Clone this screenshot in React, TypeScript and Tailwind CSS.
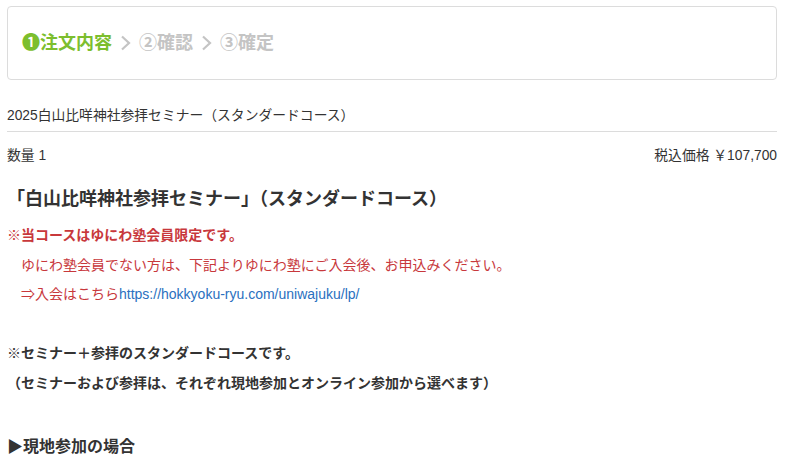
import React from "react";

const FONT = "font-['Liberation_Sans','Noto_Sans_CJK_JP',sans-serif]";

function Chevron() {
    return (
        <svg width="14" height="18" viewBox="0 0 14 18" className="ml-[6px] mr-[7px]">
            <path d="M4 2.5 L11 9 L4 15.5" fill="none" stroke="#c4c4c4" strokeWidth="2.2" />
        </svg>
    );
}

export default function App() {
    return (
        <div className={`${FONT} bg-white w-[789px] h-[464px] overflow-hidden pl-[7px] pt-[6px] text-[#333]`}>
            {/* Steps */}
            <div className="w-[770px] h-[74px] border border-[#dcdcdc] rounded-[4px] flex items-center pl-[14px]">
                <span className="text-[18px] font-bold text-[#7cbe2e]">❶注文内容</span>
                <Chevron />
                <span className="text-[18px] font-bold text-[#c4c4c4]">②確認</span>
                <Chevron />
                <span className="text-[18px] font-bold text-[#c4c4c4]">③確定</span>
            </div>

            <div className="w-[770px] mt-[26px] text-[13.8px] leading-[20px] pb-[5px] border-b border-[#dcdcdc]">
                2025白山比咩神社参拝セミナー（スタンダードコース）
            </div>

            <div className="w-[770px] mt-[14px] flex justify-between text-[13.8px] leading-[20px]">
                <span>数量 1</span>
                <span>税込価格 ￥107,700</span>
            </div>

            <h2 className="mt-[20px] text-[18px] font-bold leading-[26px]">
                「白山比咩神社参拝セミナー」（スタンダードコース）
            </h2>

            <div className="mt-[9px] text-[14px] leading-[29.5px]">
                <div className="text-[#c8383c] font-bold">※当コースはゆにわ塾会員限定です。</div>
                <div className="text-[#c8383c]">{"\u3000"}ゆにわ塾会員でない方は、下記よりゆにわ塾にご入会後、お申込みください。</div>
                <div className="text-[#c8383c]">
                    {"\u3000"}⇒入会はこちら<a className="text-[#2a70c0]">https://hokkyoku-ryu.com/uniwajuku/lp/</a>
                </div>
                <div>&nbsp;</div>
                <div className="font-bold">※セミナー＋参拝のスタンダードコースです。</div>
                <div className="font-bold">（セミナーおよび参拝は、それぞれ現地参加とオンライン参加から選べます）</div>
                <div>&nbsp;</div>
            </div>

            <div className="mt-[6px] text-[16px] font-bold leading-[26px]">▶現地参加の場合</div>
        </div>
    );
}
